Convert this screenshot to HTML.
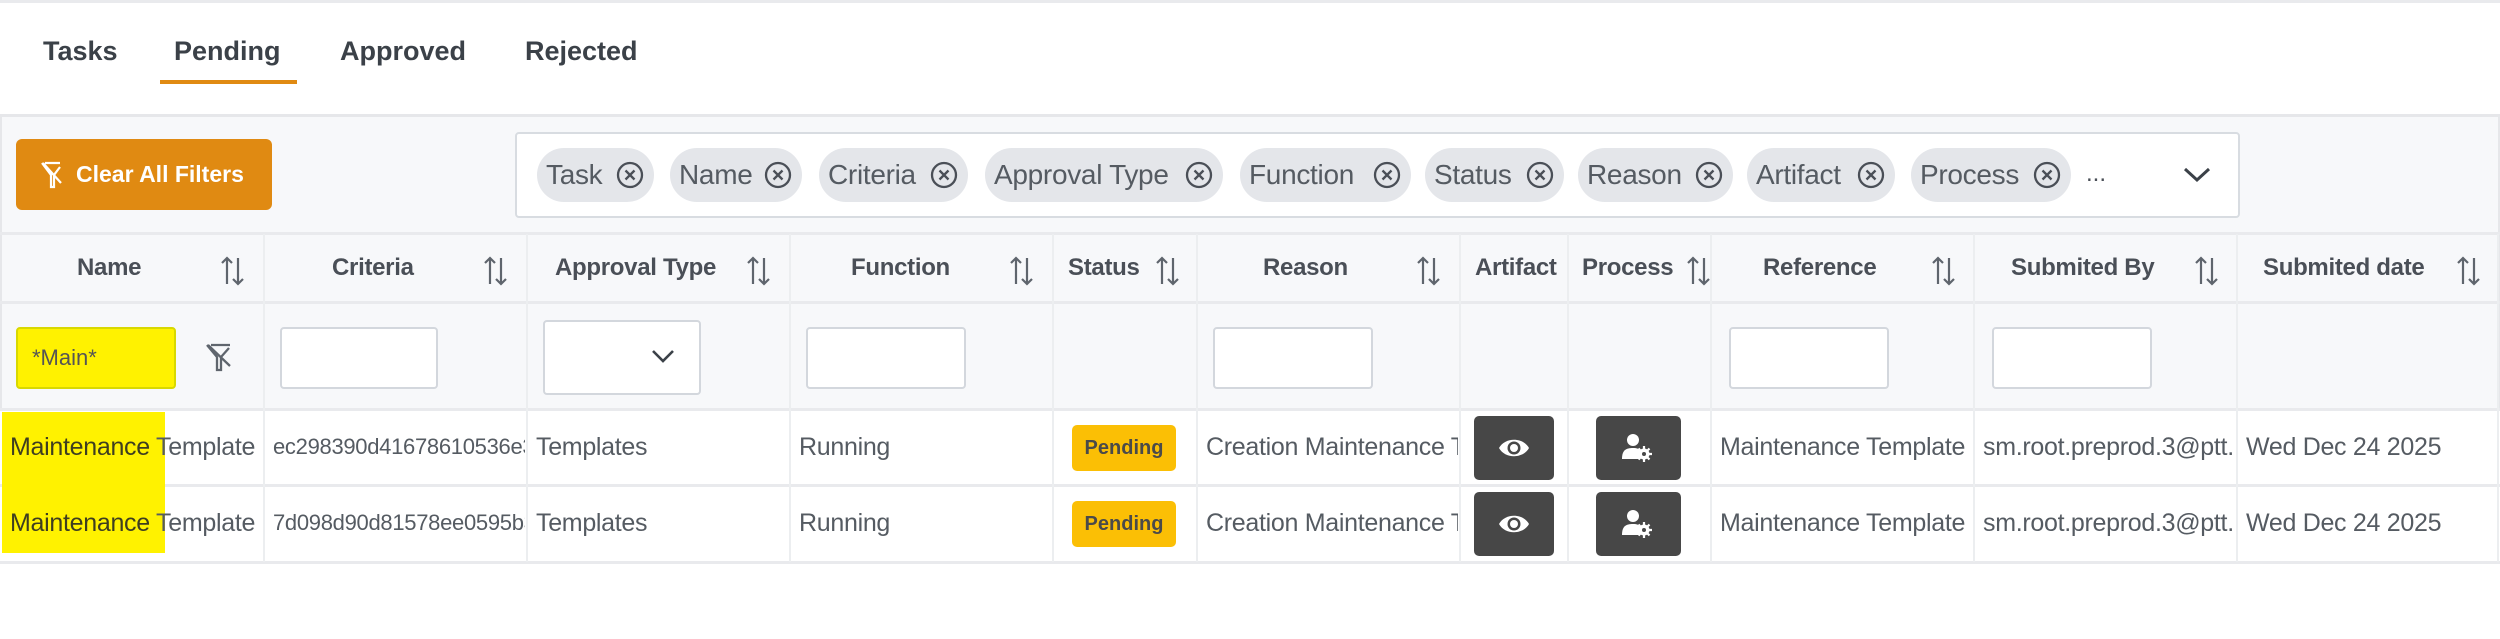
<!DOCTYPE html>
<html><head><meta charset="utf-8"><style>
*{box-sizing:border-box;margin:0;padding:0}
body{width:2500px;height:639px;background:#fff;font-family:"Liberation Sans",sans-serif;position:relative;overflow:hidden;color:#4a4f57}
.a{position:absolute}
.tab{position:absolute;top:34px;font-size:27px;font-weight:bold;color:#3b4148;line-height:34px}
.panel{position:absolute;left:0;top:114px;width:2500px;height:449px;background:#f7f8fa;border-top:3px solid #e6e7ea;border-left:2px solid #e6e7ea;border-right:2px solid #e6e7ea}
.chip{position:absolute;top:148px;height:54px;border-radius:27px;background:#e4e6ea;font-size:28px;color:#555b62;line-height:54px;padding-left:9px;white-space:nowrap;letter-spacing:-0.3px}
.chip svg{position:absolute;right:9px;top:12px}
.hline{position:absolute;left:0;width:2500px;height:3px;background:#e9eaed}
.vline{position:absolute;top:234px;width:2px;height:328px;background:#eceef0}
.hd{position:absolute;top:234px;height:68px;line-height:68px;font-size:24px;font-weight:bold;color:#4a4f57;letter-spacing:-0.3px}
.sort{position:absolute;top:255px}
.inp{position:absolute;top:327px;width:160px;height:62px;background:#fff;border:2px solid #d3d7dd;border-radius:4px}
.row{position:absolute;left:0;width:2500px;background:#fff}
.cell{position:absolute;font-size:25px;color:#555b62;white-space:nowrap;overflow:hidden;letter-spacing:-0.3px}
.badge{position:absolute;left:1072px;width:104px;height:46px;background:#fbbf05;border-radius:5px;font-size:20px;font-weight:bold;color:#4a4a4a;text-align:center;line-height:46px}
.btn{position:absolute;height:64px;background:#474747;border-radius:5px}
</style></head><body>
<div class="a" style="left:0;top:0;width:2500px;height:3px;background:#e9eaed"></div>
<div class="tab" style="left:43px">Tasks</div>
<div class="tab" style="left:174px">Pending</div>
<div class="a" style="left:160px;top:80px;width:137px;height:4px;background:#e08a12"></div>
<div class="tab" style="left:340px">Approved</div>
<div class="tab" style="left:525px">Rejected</div>

<div class="panel"></div>
<div class="a" style="left:16px;top:139px;width:256px;height:71px;background:#e08a12;border-radius:6px;color:#fff;font-size:23px;font-weight:bold;line-height:71px;padding-left:60px">Clear All Filters</div>
<svg class="a" style="left:40px;top:161px" width="24" height="28" viewBox="0 0 24 28"><path d="M2 2 L11 14 V26 H14 V14 L20 6 M5 2 H20 M3 2 L21 22" stroke="#fff" stroke-width="2.2" fill="none"/></svg>

<div class="a" style="left:515px;top:132px;width:1725px;height:86px;background:#fff;border:2px solid #d8dce1;border-radius:4px"></div>
<div class="chip" style="left:537px;width:117px">Task<svg width="30" height="30"><circle cx="15" cy="15" r="12" stroke="#4a4f57" stroke-width="2.3" fill="none"/><path d="M10.5 10.5l9 9M19.5 10.5l-9 9" stroke="#4a4f57" stroke-width="2.3"/></svg></div>
<div class="chip" style="left:670px;width:132px">Name<svg width="30" height="30"><circle cx="15" cy="15" r="12" stroke="#4a4f57" stroke-width="2.3" fill="none"/><path d="M10.5 10.5l9 9M19.5 10.5l-9 9" stroke="#4a4f57" stroke-width="2.3"/></svg></div>
<div class="chip" style="left:819px;width:149px">Criteria<svg width="30" height="30"><circle cx="15" cy="15" r="12" stroke="#4a4f57" stroke-width="2.3" fill="none"/><path d="M10.5 10.5l9 9M19.5 10.5l-9 9" stroke="#4a4f57" stroke-width="2.3"/></svg></div>
<div class="chip" style="left:985px;width:238px">Approval Type<svg width="30" height="30"><circle cx="15" cy="15" r="12" stroke="#4a4f57" stroke-width="2.3" fill="none"/><path d="M10.5 10.5l9 9M19.5 10.5l-9 9" stroke="#4a4f57" stroke-width="2.3"/></svg></div>
<div class="chip" style="left:1240px;width:171px">Function<svg width="30" height="30"><circle cx="15" cy="15" r="12" stroke="#4a4f57" stroke-width="2.3" fill="none"/><path d="M10.5 10.5l9 9M19.5 10.5l-9 9" stroke="#4a4f57" stroke-width="2.3"/></svg></div>
<div class="chip" style="left:1425px;width:139px">Status<svg width="30" height="30"><circle cx="15" cy="15" r="12" stroke="#4a4f57" stroke-width="2.3" fill="none"/><path d="M10.5 10.5l9 9M19.5 10.5l-9 9" stroke="#4a4f57" stroke-width="2.3"/></svg></div>
<div class="chip" style="left:1578px;width:155px">Reason<svg width="30" height="30"><circle cx="15" cy="15" r="12" stroke="#4a4f57" stroke-width="2.3" fill="none"/><path d="M10.5 10.5l9 9M19.5 10.5l-9 9" stroke="#4a4f57" stroke-width="2.3"/></svg></div>
<div class="chip" style="left:1747px;width:148px">Artifact<svg width="30" height="30"><circle cx="15" cy="15" r="12" stroke="#4a4f57" stroke-width="2.3" fill="none"/><path d="M10.5 10.5l9 9M19.5 10.5l-9 9" stroke="#4a4f57" stroke-width="2.3"/></svg></div>
<div class="chip" style="left:1911px;width:160px">Process<svg width="30" height="30"><circle cx="15" cy="15" r="12" stroke="#4a4f57" stroke-width="2.3" fill="none"/><path d="M10.5 10.5l9 9M19.5 10.5l-9 9" stroke="#4a4f57" stroke-width="2.3"/></svg></div>
<div class="a" style="left:2086px;top:160px;font-size:24px;color:#4a4f57">...</div>
<svg class="a" style="left:2183px;top:166px" width="28" height="18"><path d="M2 3 L14 14 L26 3" stroke="#3b4148" stroke-width="3" fill="none"/></svg>

<div class="hline" style="top:232px"></div>
<div class="hline" style="top:301px"></div>

<div class="row" style="top:410px;height:75px"></div>
<div class="row" style="top:487px;height:75px"></div>
<div class="hline" style="top:408px"></div>
<div class="hline" style="top:484px"></div>
<div class="hline" style="top:561px"></div>

<div class="vline" style="left:263px"></div><div class="vline" style="left:526px"></div><div class="vline" style="left:789px"></div><div class="vline" style="left:1052px"></div><div class="vline" style="left:1196px"></div><div class="vline" style="left:1459px"></div><div class="vline" style="left:1567px"></div><div class="vline" style="left:1710px"></div><div class="vline" style="left:1973px"></div><div class="vline" style="left:2236px"></div><div class="vline" style="left:2497px"></div>

<div class="hd" style="left:77px">Name</div>
<div class="hd" style="left:332px">Criteria</div>
<div class="hd" style="left:555px">Approval Type</div>
<div class="hd" style="left:851px">Function</div>
<div class="hd" style="left:1068px">Status</div>
<div class="hd" style="left:1263px">Reason</div>
<div class="hd" style="left:1475px">Artifact</div>
<div class="hd" style="left:1582px">Process</div>
<div class="hd" style="left:1763px">Reference</div>
<div class="hd" style="left:2011px">Submited By</div>
<div class="hd" style="left:2263px">Submited date</div>

<svg width="0" height="0" style="position:absolute"><defs><g id="s"><path d="M9 29V3M4 8l5-5 5 5M20 3v26M15 24l5 5 5-5" stroke="#5f656d" stroke-width="2.2" fill="none"/></g></defs></svg>
<svg class="sort" style="left:218px" width="32" height="32"><use href="#s"/></svg>
<svg class="sort" style="left:481px" width="32" height="32"><use href="#s"/></svg>
<svg class="sort" style="left:744px" width="32" height="32"><use href="#s"/></svg>
<svg class="sort" style="left:1007px" width="32" height="32"><use href="#s"/></svg>
<svg class="sort" style="left:1153px" width="32" height="32"><use href="#s"/></svg>
<svg class="sort" style="left:1414px" width="32" height="32"><use href="#s"/></svg>
<svg class="sort" style="left:1684px" width="32" height="32"><use href="#s"/></svg>
<svg class="sort" style="left:1929px" width="32" height="32"><use href="#s"/></svg>
<svg class="sort" style="left:2192px" width="32" height="32"><use href="#s"/></svg>
<svg class="sort" style="left:2454px" width="32" height="32"><use href="#s"/></svg>

<div class="inp" style="left:16px;width:160px;background:#fff200;border-color:#d8d800;font-size:22px;color:#555;line-height:58px;padding-left:14px">*Main*</div>
<svg class="a" style="left:205px;top:342px" width="30" height="30"><path d="M2 3 L12 15 V28 H16 V15 L24 6 M6 3 H25 M3 3 L25 24" stroke="#5f656d" stroke-width="2.3" fill="none"/></svg>
<div class="inp" style="left:280px;width:158px"></div>
<div class="inp" style="left:543px;top:320px;width:158px;height:75px"></div>
<svg class="a" style="left:651px;top:349px" width="24" height="16"><path d="M2 2 L12 12 L22 2" stroke="#3b4148" stroke-width="2.6" fill="none"/></svg>
<div class="inp" style="left:806px"></div>
<div class="inp" style="left:1213px"></div>
<div class="inp" style="left:1729px"></div>
<div class="inp" style="left:1992px"></div>

<div class="a" style="left:2px;top:412px;width:163px;height:141px;background:#fff200"></div>

<div class="cell" style="left:10px;top:433px;width:252px"><span style="color:#3e3e20">Maintenance</span> Template</div>
<div class="cell" style="left:273px;top:434px;width:252px;font-size:22px">ec298390d41678610536e3</div>
<div class="cell" style="left:536px;top:433px">Templates</div>
<div class="cell" style="left:799px;top:433px">Running</div>
<div class="badge" style="top:425px">Pending</div>
<div class="cell" style="left:1206px;top:433px;width:252px">Creation Maintenance T</div>
<div class="cell" style="left:1720px;top:433px;width:252px">Maintenance Template</div>
<div class="cell" style="left:1983px;top:433px;width:252px">sm.root.preprod.3@ptt.</div>
<div class="cell" style="left:2246px;top:433px">Wed Dec 24 2025</div>

<div class="cell" style="left:10px;top:509px;width:252px"><span style="color:#3e3e20">Maintenance</span> Template</div>
<div class="cell" style="left:273px;top:510px;width:252px;font-size:22px">7d098d90d81578ee0595b3</div>
<div class="cell" style="left:536px;top:509px">Templates</div>
<div class="cell" style="left:799px;top:509px">Running</div>
<div class="badge" style="top:501px">Pending</div>
<div class="cell" style="left:1206px;top:509px;width:252px">Creation Maintenance T</div>
<div class="cell" style="left:1720px;top:509px;width:252px">Maintenance Template</div>
<div class="cell" style="left:1983px;top:509px;width:252px">sm.root.preprod.3@ptt.</div>
<div class="cell" style="left:2246px;top:509px">Wed Dec 24 2025</div>

<div class="btn" style="left:1474px;top:416px;width:80px"><svg style="position:absolute;left:24px;top:20px" width="32" height="24" viewBox="0 0 32 24"><path d="M1 12 C7 1 25 1 31 12 C25 23 7 23 1 12Z" fill="#fff"/><circle cx="16" cy="12" r="6.5" fill="#474747"/><circle cx="16" cy="12" r="4" fill="#fff"/></svg></div>
<div class="btn" style="left:1596px;top:416px;width:85px"><svg style="position:absolute;left:26px;top:17px" width="32" height="30" viewBox="0 0 32 30"><circle cx="11" cy="7" r="6" fill="#fff"/><path d="M0 26 C0 17 4 15 11 15 C15 15 17 16 18 17 L18 26Z" fill="#fff"/><circle cx="22" cy="21" r="5.5" fill="#fff"/><circle cx="22" cy="21" r="2" fill="#474747"/><path d="M22 13v3M22 26v3M14 21h3M27 21h3M16.5 15.5l2 2M25.5 24.5l2 2M16.5 26.5l2-2M25.5 17.5l2-2" stroke="#fff" stroke-width="2.2"/></svg></div>
<div class="btn" style="left:1474px;top:492px;width:80px"><svg style="position:absolute;left:24px;top:20px" width="32" height="24" viewBox="0 0 32 24"><path d="M1 12 C7 1 25 1 31 12 C25 23 7 23 1 12Z" fill="#fff"/><circle cx="16" cy="12" r="6.5" fill="#474747"/><circle cx="16" cy="12" r="4" fill="#fff"/></svg></div>
<div class="btn" style="left:1596px;top:492px;width:85px"><svg style="position:absolute;left:26px;top:17px" width="32" height="30" viewBox="0 0 32 30"><circle cx="11" cy="7" r="6" fill="#fff"/><path d="M0 26 C0 17 4 15 11 15 C15 15 17 16 18 17 L18 26Z" fill="#fff"/><circle cx="22" cy="21" r="5.5" fill="#fff"/><circle cx="22" cy="21" r="2" fill="#474747"/><path d="M22 13v3M22 26v3M14 21h3M27 21h3M16.5 15.5l2 2M25.5 24.5l2 2M16.5 26.5l2-2M25.5 17.5l2-2" stroke="#fff" stroke-width="2.2"/></svg></div>
</body></html>
